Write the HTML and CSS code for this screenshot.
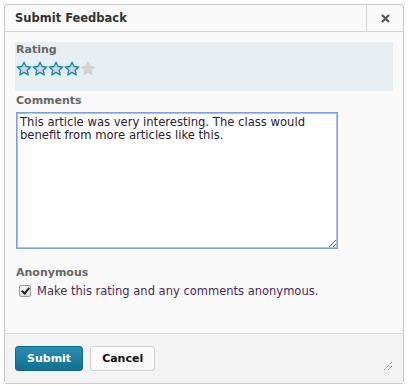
FILE: index.html
```html
<!DOCTYPE html>
<html lang="en">
<head>
<meta charset="UTF-8">
<title>Submit Feedback</title>
<link rel="stylesheet" href="styles.css">
</head>
<body>

<div class="dialog">
  <div class="dialog-header">
    <div class="dialog-title">Submit Feedback</div>
    <button class="close-btn" aria-label="Close">
      <svg width="9" height="9" viewBox="0 0 9 9"><path d="M1 1L8 8M8 1L1 8" stroke="#555" stroke-width="2.2"/></svg>
    </button>
  </div>

  <div class="dialog-body">
    <div class="rating">
      <div class="label">Rating</div>
      <div class="stars">
        <svg class="star on" viewBox="0 0 16 16"><path d="M8 1.2l2 4.3 4.7.5-3.5 3.2 1 4.6L8 11.4l-4.2 2.4 1-4.6L1.3 6l4.7-.5z"/></svg>
        <svg class="star on" viewBox="0 0 16 16"><path d="M8 1.2l2 4.3 4.7.5-3.5 3.2 1 4.6L8 11.4l-4.2 2.4 1-4.6L1.3 6l4.7-.5z"/></svg>
        <svg class="star on" viewBox="0 0 16 16"><path d="M8 1.2l2 4.3 4.7.5-3.5 3.2 1 4.6L8 11.4l-4.2 2.4 1-4.6L1.3 6l4.7-.5z"/></svg>
        <svg class="star on" viewBox="0 0 16 16"><path d="M8 1.2l2 4.3 4.7.5-3.5 3.2 1 4.6L8 11.4l-4.2 2.4 1-4.6L1.3 6l4.7-.5z"/></svg>
        <svg class="star off" viewBox="0 0 16 16"><path d="M8 1.2l2 4.3 4.7.5-3.5 3.2 1 4.6L8 11.4l-4.2 2.4 1-4.6L1.3 6l4.7-.5z"/></svg>
      </div>
    </div>

    <div class="label comments-label">Comments</div>
    <textarea class="comments">This article was very interesting. The class would benefit from more articles like this.</textarea>

    <div class="label anon-label">Anonymous</div>
    <label class="check-row">
      <input type="checkbox" checked>
      <span>Make this rating and any comments anonymous.</span>
    </label>
  </div>

  <div class="dialog-footer">
    <button class="btn btn-primary">Submit</button>
    <button class="btn">Cancel</button>
    <svg class="grip" width="10" height="10" viewBox="0 0 10 10"><path d="M9 1L1 9M9 5L5 9" stroke="#666" stroke-width="1" stroke-dasharray="1 1"/></svg>
  </div>
</div>

</body>
</html>
```

FILE: styles.css
```css
body {
  margin: 0;
  background-color: #fff;
  font-family: "DejaVu Sans", Verdana, sans-serif;
  font-size: 11.5px;
  color: #333;
}
.dialog {
  margin: 4px;
  width: 398px;
  height: 378px;
  border: 1px solid #c9c9c9;
  border-radius: 3px;
  background-color: #f9f9f9;
  display: flex;
  flex-direction: column;
}
.dialog-header {
  display: flex;
  height: 26px;
  border-bottom: 1px solid #d4d4d4;
}
.dialog-title {
  flex: 1;
  padding: 6px 0 0 10px;
  font-size: 11.5px;
  font-weight: bold;
  color: #333;
}
.close-btn {
  width: 37px;
  border: none;
  border-left: 1px solid #d4d4d4;
  background: transparent;
  display: flex;
  align-items: center;
  justify-content: center;
  padding: 0;
  cursor: pointer;
}
.dialog-body {
  flex: 1;
  padding: 10px 10px 0 10px;
}
.label {
  font-weight: bold;
  color: #666;
  font-size: 11px;
}
.rating {
  background-color: #e6eef1;
  height: 48px;
  padding-top: 1px;
}
.rating .label {
  padding-left: 1px;
}
.stars {
  display: flex;
  margin-top: 5px;
  padding-left: 1px;
}
.star {
  width: 16px;
  height: 16px;
  margin-right: 0;
}
.star path {
  stroke-linejoin: round;
}
.star.on path {
  fill: #cfd7db;
  stroke: #1a8aa8;
  stroke-width: 1.4;
}
.star.off path {
  fill: #d2d2d2;
  stroke: #d2d2d2;
  stroke-width: 1;
}
.comments-label {
  margin-top: 3px;
  padding-left: 1px;
}
.comments {
  display: block;
  margin: 5px 0 0 1px;
  width: 322px;
  height: 137px;
  box-sizing: border-box;
  border: 1px solid #7b9ee6;
  outline: 1px solid #a6c1f0;
  outline-offset: -2px;
  padding: 3px 3px;
  font-family: "DejaVu Sans", Verdana, sans-serif;
  font-size: 11.6px;
  line-height: 13px;
  color: #2b2035;
  resize: both;
}
.anon-label {
  margin-top: 17px;
  padding-left: 1px;
}
.check-row {
  display: flex;
  align-items: center;
  margin-top: 5px;
  padding-left: 4px;
  color: #4a2a5a;
}
.check-row input {
  appearance: none;
  position: relative;
  margin: 0 6px 0 0;
  width: 12px;
  height: 12px;
  border: 1px solid #9a9a9a;
  border-radius: 2px;
  background: linear-gradient(#f4f4f4, #dcdcdc);
}
.check-row input:checked::after {
  content: "";
  position: absolute;
  left: 3px;
  top: 0;
  width: 3px;
  height: 6px;
  border: solid #222;
  border-width: 0 2px 2px 0;
  transform: rotate(40deg);
}
.dialog-footer {
  height: 49px;
  border-top: 1px solid #d9d9d9;
  background-color: #f3f3f3;
  display: flex;
  align-items: center;
  padding: 0 10px;
  gap: 7px;
  position: relative;
}
.btn {
  height: 25px;
  padding: 0 11px;
  font-family: "DejaVu Sans", Verdana, sans-serif;
  font-size: 11px;
  font-weight: bold;
  color: #111;
  background-color: #f9f9f9;
  border: 1px solid #d0d0d0;
  border-radius: 3px;
  cursor: pointer;
}
.btn-primary {
  color: #fff;
  background: linear-gradient(#2a8db0, #11708f);
  border-color: #0f6784;
}
.grip {
  position: absolute;
  right: 10px;
  bottom: 12px;
}
```
